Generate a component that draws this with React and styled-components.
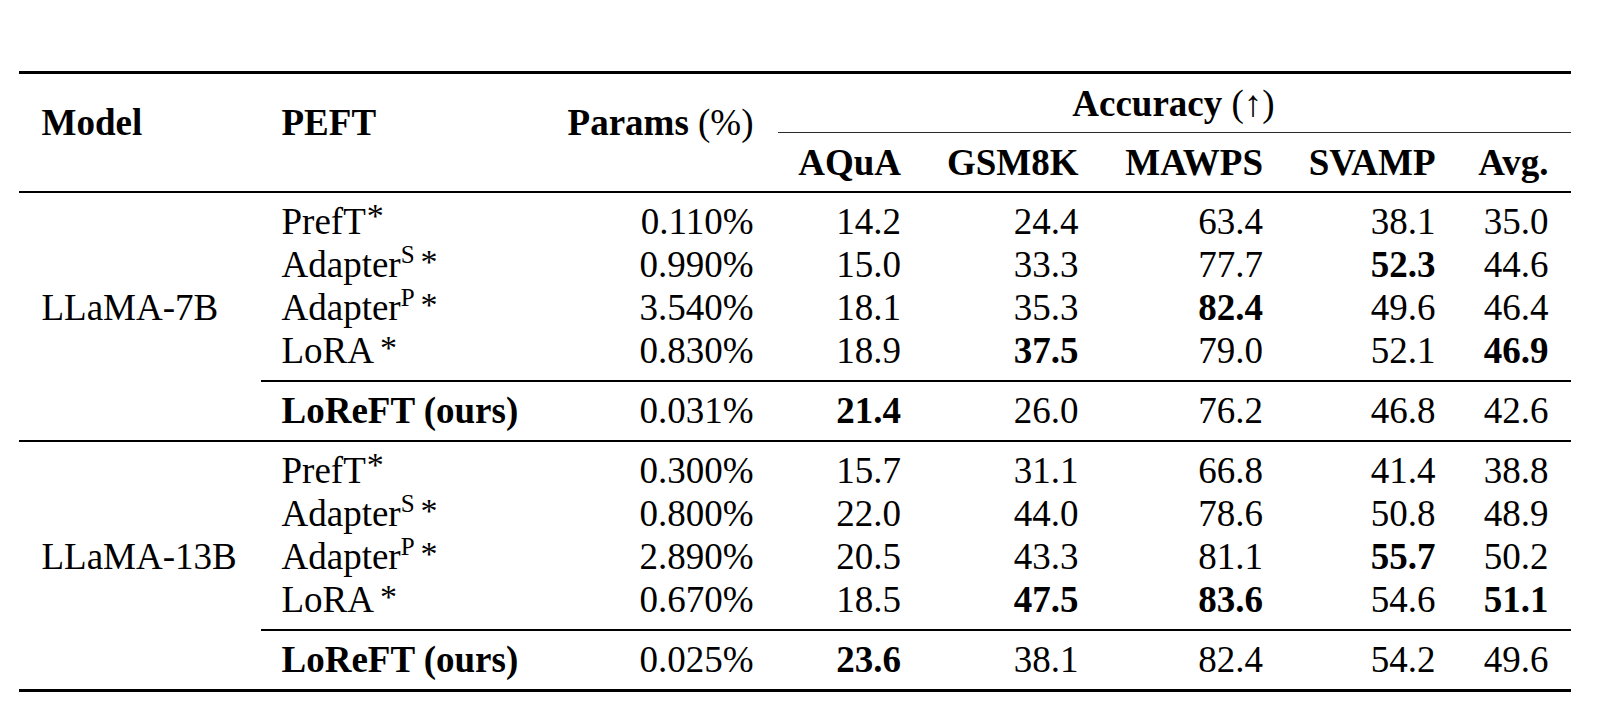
import React from 'react';
import styled, { createGlobalStyle } from 'styled-components';

const GlobalStyle = createGlobalStyle`
  html, body {
    margin: 0;
    padding: 0;
    background: #ffffff;
  }
  body {
    font-family: "Liberation Serif", "Times New Roman", serif;
    color: #000000;
  }
`;

const COLS = '240px 286px 231px 147.5px 177.5px 184.5px 172.5px 113px';

const Page = styled.div`
  padding: 71px 0 0 19px;
`;

const Table = styled.div`
  display: flex;
  flex-direction: column;
  width: 1552px;
  font-size: 37px;
  line-height: 1;
`;

const Rule = styled.div`
  height: ${p => p.$h}px;
  margin-left: ${p => p.$from || 0}px;
  background: ${p => p.$color || '#000000'};
`;

const Header = styled.div`
  display: grid;
  grid-template-columns: ${COLS};
  grid-template-rows: 58px 1px 58px;
`;

const Cell = styled.div`
  display: flex;
  align-items: center;
  justify-content: ${p => (p.$align === 'right' ? 'flex-end' : p.$align === 'center' ? 'center' : 'flex-start')};
  padding: 0 22.5px;
  white-space: nowrap;
  font-weight: ${p => (p.$bold ? 700 : 400)};
`;

const SpanHead = styled(Cell)`
  grid-row: 1 / 4;
  align-items: flex-start;
  padding-top: 29.5px;
`;

const GroupHead = styled(Cell)`
  grid-column: 4 / 9;
  grid-row: 1;
`;

const CMid = styled.div`
  grid-column: 4 / 9;
  grid-row: 2;
  margin-left: 2px;
  background: #2a2a2a;
`;

const SubHead = styled(Cell)`
  grid-row: 3;
`;

const Group = styled.div`
  display: flex;
  flex-direction: column;
  padding: 6.5px 0 8.5px;
`;

const Row = styled.div`
  display: grid;
  grid-template-columns: ${COLS};
  height: 43px;
`;

const Light = styled.span`
  font-weight: 400;
`;

const Label = styled.span`
  display: inline-flex;
  align-items: baseline;
`;

const Sup = styled.span`
  font-size: 25px;
  position: relative;
  top: -14px;
`;

const Star = styled.span`
  font-size: 34px;
  position: relative;
  top: ${p => (p.$math ? -4 : -7)}px;
  margin-left: ${p => (p.$math ? 6 : 1)}px;
`;

const methodLabel = m => {
  if (m === 'PrefT') return <Label>PrefT<Star>*</Star></Label>;
  if (m === 'LoRA') return <Label>LoRA<Star $math>*</Star></Label>;
  if (m === 'AdapterS') return <Label>Adapter<Sup>S</Sup><Star $math>*</Star></Label>;
  if (m === 'AdapterP') return <Label>Adapter<Sup>P</Sup><Star $math>*</Star></Label>;
  return m;
};

const blocks = [
  {
    model: 'LLaMA-7B',
    rows: [
      { m: 'PrefT', p: '0.110%', v: ['14.2', '24.4', '63.4', '38.1', '35.0'], b: [] },
      { m: 'AdapterS', p: '0.990%', v: ['15.0', '33.3', '77.7', '52.3', '44.6'], b: [3] },
      { m: 'AdapterP', p: '3.540%', v: ['18.1', '35.3', '82.4', '49.6', '46.4'], b: [2] },
      { m: 'LoRA', p: '0.830%', v: ['18.9', '37.5', '79.0', '52.1', '46.9'], b: [1, 4] },
    ],
    ours: { p: '0.031%', v: ['21.4', '26.0', '76.2', '46.8', '42.6'], b: [0] },
  },
  {
    model: 'LLaMA-13B',
    rows: [
      { m: 'PrefT', p: '0.300%', v: ['15.7', '31.1', '66.8', '41.4', '38.8'], b: [] },
      { m: 'AdapterS', p: '0.800%', v: ['22.0', '44.0', '78.6', '50.8', '48.9'], b: [] },
      { m: 'AdapterP', p: '2.890%', v: ['20.5', '43.3', '81.1', '55.7', '50.2'], b: [3] },
      { m: 'LoRA', p: '0.670%', v: ['18.5', '47.5', '83.6', '54.6', '51.1'], b: [1, 2, 4] },
    ],
    ours: { p: '0.025%', v: ['23.6', '38.1', '82.4', '54.2', '49.6'], b: [0] },
  },
];

const tasks = ['AQuA', 'GSM8K', 'MAWPS', 'SVAMP', 'Avg.'];

const Scores = ({ v, b }) =>
  v.map((x, i) => (
    <Cell key={i} $align="right" $bold={b.includes(i)}>
      {x}
    </Cell>
  ));

const Block = ({ data, last }) => (
  <>
    <Group>
      {data.rows.map((r, i) => (
        <Row key={r.m}>
          <Cell>{i === 2 ? data.model : ''}</Cell>
          <Cell>{methodLabel(r.m)}</Cell>
          <Cell $align="right">{r.p}</Cell>
          <Scores v={r.v} b={r.b} />
        </Row>
      ))}
    </Group>
    <Rule $h={2} $from={242} />
    <Group>
      <Row>
        <Cell />
        <Cell $bold>LoReFT (ours)</Cell>
        <Cell $align="right">{data.ours.p}</Cell>
        <Scores v={data.ours.v} b={data.ours.b} />
      </Row>
    </Group>
    <Rule $h={last ? 3 : 2} />
  </>
);

export default function App() {
  return (
    <>
      <GlobalStyle />
      <Page>
        <Table>
          <Rule $h={3} />
          <Header>
            <SpanHead style={{ gridColumn: 1 }} $bold>Model</SpanHead>
            <SpanHead style={{ gridColumn: 2 }} $bold>PEFT</SpanHead>
            <SpanHead style={{ gridColumn: 3 }} $bold $align="right">
              Params&nbsp;<Light>(%)</Light>
            </SpanHead>
            <GroupHead $bold $align="center">
              Accuracy&nbsp;<Light>(↑)</Light>
            </GroupHead>
            <CMid />
            {tasks.map((t, i) => (
              <SubHead key={t} style={{ gridColumn: i + 4 }} $bold $align="right">
                {t}
              </SubHead>
            ))}
          </Header>
          <Rule $h={2} />
          {blocks.map((b, i) => (
            <Block key={b.model} data={b} last={i === blocks.length - 1} />
          ))}
        </Table>
      </Page>
    </>
  );
}
